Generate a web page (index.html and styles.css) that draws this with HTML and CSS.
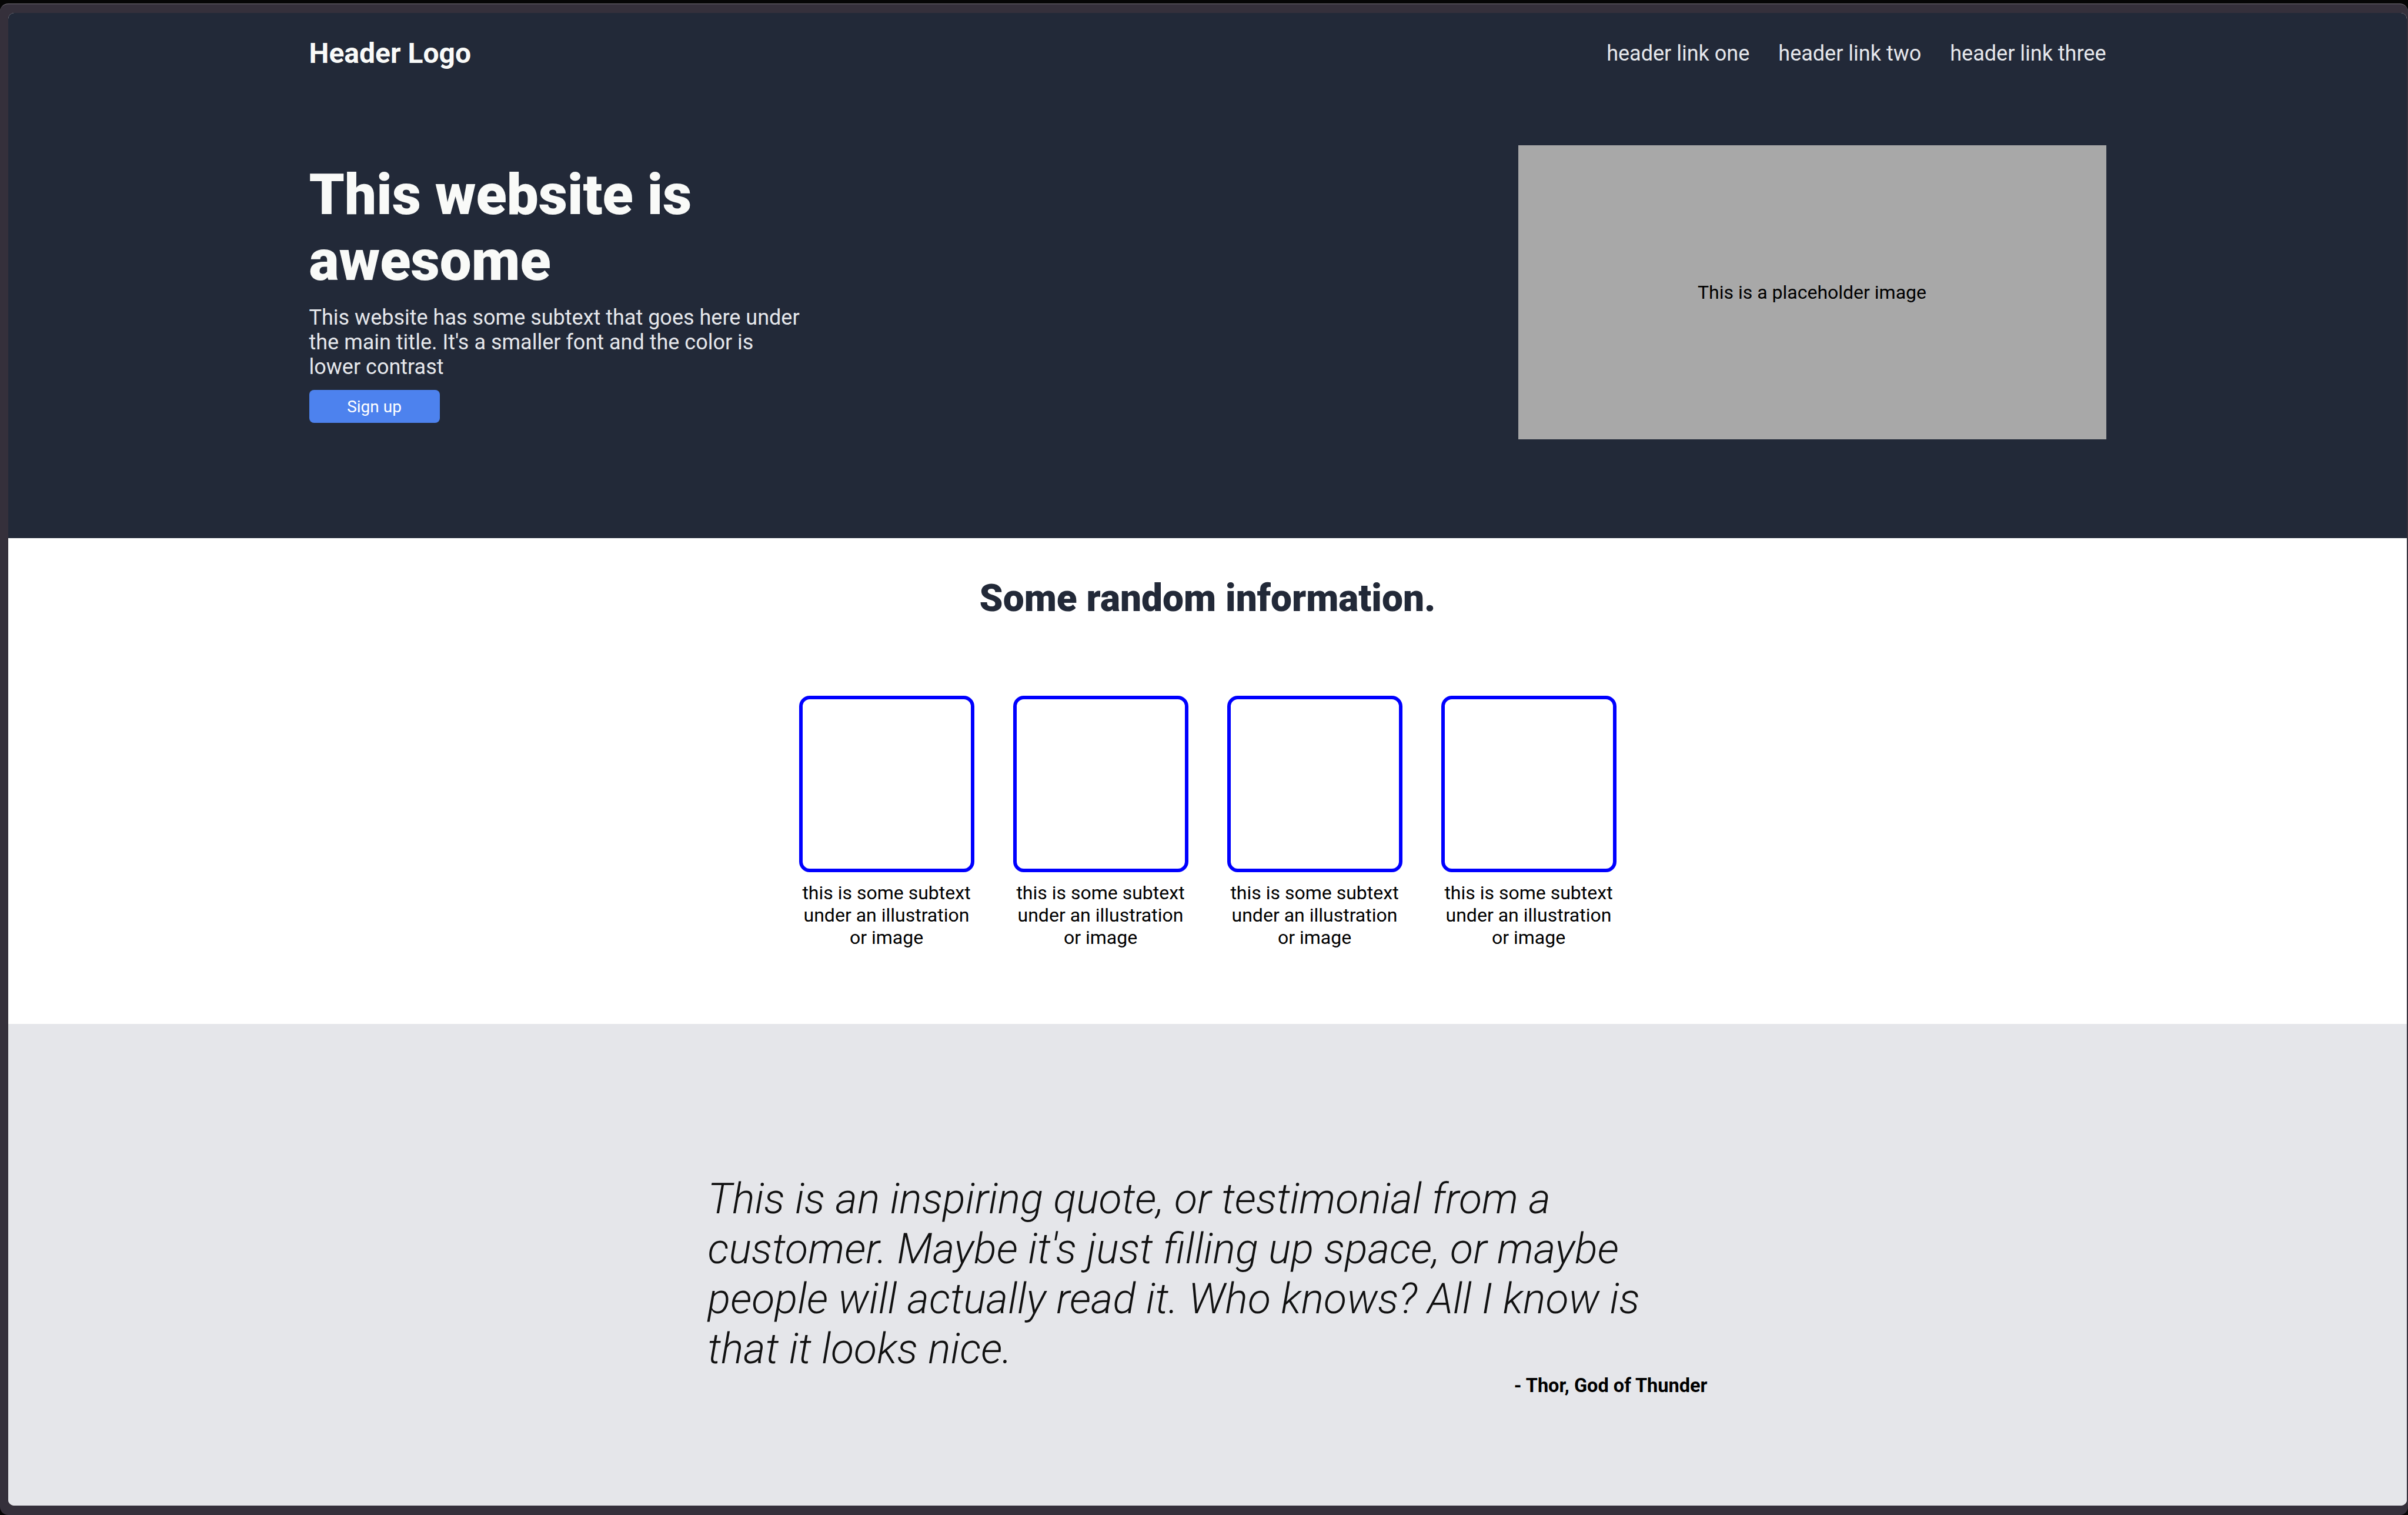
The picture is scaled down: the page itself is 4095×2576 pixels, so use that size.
FILE: index.html
```html
<!DOCTYPE html>
<html lang="en">
<head>
<meta charset="utf-8">
<title>Landing page</title>
<link rel="stylesheet" href="styles.css">
</head>
<body>
<div class="bezel">
  <div class="window">
    <section class="hero">
      <div class="container">
        <header class="topbar">
          <div class="logo">Header Logo</div>
          <nav class="nav">
            <a href="#">header link one</a>
            <a href="#">header link two</a>
            <a href="#">header link three</a>
          </nav>
        </header>
        <div class="hero-row">
          <div class="hero-text">
            <h1 class="hero-title">This website is awesome</h1>
            <p class="hero-sub">This website has some subtext that goes here under the main title. It's a smaller font and the color is lower contrast</p>
            <button class="btn">Sign up</button>
          </div>
          <div class="placeholder">This is a placeholder image</div>
        </div>
      </div>
    </section>
    <section class="info">
      <h2 class="info-title">Some random information.</h2>
      <div class="cards">
        <div class="card"><div class="card-box"></div><p class="card-text">this is some subtext under an illustration or image</p></div>
        <div class="card"><div class="card-box"></div><p class="card-text">this is some subtext under an illustration or image</p></div>
        <div class="card"><div class="card-box"></div><p class="card-text">this is some subtext under an illustration or image</p></div>
        <div class="card"><div class="card-box"></div><p class="card-text">this is some subtext under an illustration or image</p></div>
      </div>
    </section>
    <section class="quote-section">
      <div class="quote-wrap">
        <p class="quote">This is an inspiring quote, or testimonial from a customer. Maybe it's just filling up space, or maybe people will actually read it. Who knows? All I know is that it looks nice.</p>
        <p class="author">- Thor, God of Thunder</p>
      </div>
    </section>
  </div>
</div>
</body>
</html>
```

FILE: styles.css
```css
* { box-sizing: border-box; }

html, body {
  margin: 0;
  padding: 0;
}

body {
  background: #060606;
  font-family: Roboto, "Liberation Sans", Arial, sans-serif;
  width: 4095px;
  height: 2576px;
  padding-top: 6px;
  overflow: hidden;
}

.bezel {
  height: 2570px;
  background: #35303b;
  border-top: 1px solid #77727c;
  border-radius: 14px;
  padding: 15px 2px 10px 14px;
}

.window {
  height: 2538px;
  border-radius: 10px;
  overflow: hidden;
  display: flex;
  flex-direction: column;
  background: #ffffff;
}

/* HERO */
.hero {
  background: #222938;
  padding: 40px 0 168px;
}

.container {
  width: 3056px;
  margin: 0 auto;
}

.topbar {
  display: flex;
  justify-content: space-between;
  align-items: center;
}

.logo {
  color: #f9faf8;
  font-size: 48px;
  font-weight: 700;
}

.nav {
  display: flex;
  gap: 49px;
}

.nav a {
  color: #e5e7eb;
  font-size: 36px;
  text-decoration: none;
}

.hero-row {
  margin-top: 128px;
  display: flex;
  justify-content: space-between;
  align-items: center;
}

.hero-text {
  width: 840px;
}

.hero-title {
  margin: 0;
  color: #f9faf8;
  font-size: 96px;
  font-weight: 900;
  line-height: 1.172;
}

.hero-sub {
  margin: 19px 0 18px;
  color: #e5e7eb;
  font-size: 36px;
  line-height: 1.172;
}

.btn {
  display: block;
  width: 222px;
  height: 56px;
  border: none;
  border-radius: 8px;
  background: #4d82ee;
  color: #ffffff;
  font-family: Roboto, "Liberation Sans", Arial, sans-serif;
  font-size: 28px;
  padding: 0;
}

.placeholder {
  width: 1000px;
  height: 500px;
  background: #a8a8a8;
  color: #000;
  font-size: 32px;
  display: flex;
  align-items: center;
  justify-content: center;
}

/* INFO */
.info {
  background: #ffffff;
  padding: 65px 0 128px;
  display: flex;
  flex-direction: column;
  align-items: center;
}

.info-title {
  margin: 0;
  color: #222938;
  font-size: 64px;
  font-weight: 900;
  line-height: 1.172;
}

.cards {
  margin-top: 128px;
  display: flex;
  gap: 66px;
}

.card {
  width: 298px;
}

.card-box {
  height: 300px;
  border: 6px solid #0000ff;
  border-radius: 18px;
}

.card-text {
  margin: 16px 0 0;
  font-size: 32px;
  line-height: 38px;
  text-align: center;
  color: #000;
}

/* QUOTE */
.quote-section {
  flex: 1;
  background: #e5e6ea;
  padding-top: 255px;
}

.quote-wrap {
  width: 1700px;
  margin: 0 auto;
}

.quote {
  margin: 0;
  font-size: 72px;
  font-weight: 300;
  font-style: italic;
  line-height: 85px;
  color: #111;
}

.author {
  margin: 1px 0 0;
  text-align: right;
  font-size: 32.5px;
  font-weight: 700;
  color: #000;
}
```
